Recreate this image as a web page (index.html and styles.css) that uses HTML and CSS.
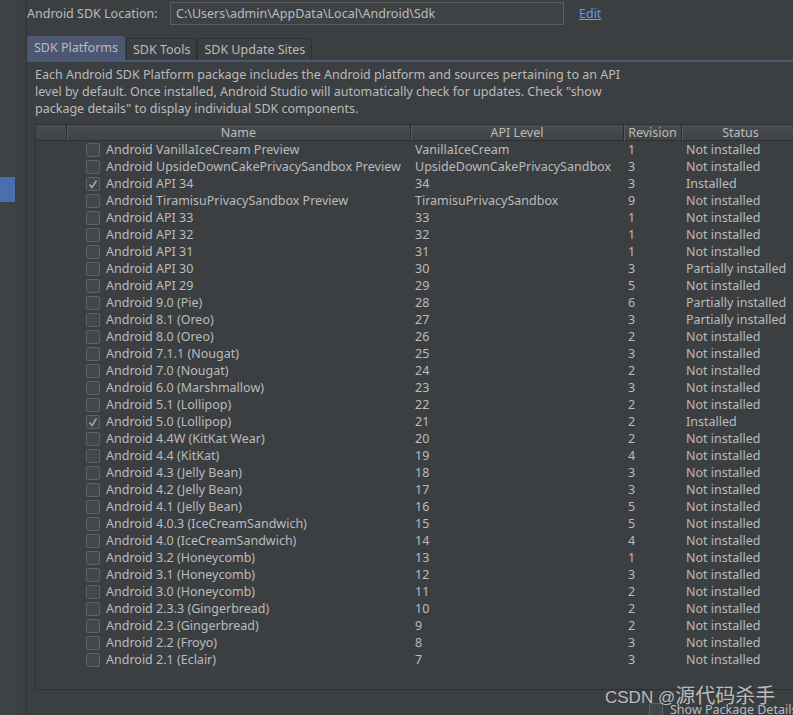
FILE: index.html
```html
<!DOCTYPE html>
<html>
<head>
<meta charset="utf-8">
<link rel="stylesheet" href="styles.css">
</head>
<body>
<div class="app">
  <aside class="sidebar"><div class="side-sel"></div></aside>
  <div class="gutter"></div>
  <main class="main">
    <div class="loc-row">
      <span class="loc-label">Android SDK Location:</span>
      <div class="loc-input">C:\Users\admin\AppData\Local\Android\Sdk</div>
      <a class="edit">Edit</a>
    </div>
    <div class="tabs">
      <div class="tab active">SDK Platforms</div>
      <div class="tab">SDK Tools</div>
      <div class="tab">SDK Update Sites</div>
    </div>
    <div class="panel">
      <p class="desc">Each Android SDK Platform package includes the Android platform and sources pertaining to an API<br>level by default. Once installed, Android Studio will automatically check for updates. Check "show<br>package details" to display individual SDK components.</p>
      <div class="table">
        <div class="thead">
          <div class="th"></div>
          <div class="th">Name</div>
          <div class="th">API Level</div>
          <div class="th">Revision</div>
          <div class="th">Status</div>
        </div>
        <div class="tbody" id="tbody"></div>
      </div>
      <div class="footer">
        <span class="cb"></span>
        <span class="footer-label">Show Package Details</span>
      </div>
    </div>
  </main>
  <div class="watermark"><span class="wm-latin">CSDN @</span>源代码杀手</div>
</div>
<script src="app.js"></script>
</body>
</html>
```
FILE: app.js
```js
const rows = [
  ["Android VanillaIceCream Preview","VanillaIceCream","1","Not installed",0],
  ["Android UpsideDownCakePrivacySandbox Preview","UpsideDownCakePrivacySandbox","3","Not installed",0],
  ["Android API 34","34","3","Installed",1],
  ["Android TiramisuPrivacySandbox Preview","TiramisuPrivacySandbox","9","Not installed",0],
  ["Android API 33","33","1","Not installed",0],
  ["Android API 32","32","1","Not installed",0],
  ["Android API 31","31","1","Not installed",0],
  ["Android API 30","30","3","Partially installed",0],
  ["Android API 29","29","5","Not installed",0],
  ["Android 9.0 (Pie)","28","6","Partially installed",0],
  ["Android 8.1 (Oreo)","27","3","Partially installed",0],
  ["Android 8.0 (Oreo)","26","2","Not installed",0],
  ["Android 7.1.1 (Nougat)","25","3","Not installed",0],
  ["Android 7.0 (Nougat)","24","2","Not installed",0],
  ["Android 6.0 (Marshmallow)","23","3","Not installed",0],
  ["Android 5.1 (Lollipop)","22","2","Not installed",0],
  ["Android 5.0 (Lollipop)","21","2","Installed",1],
  ["Android 4.4W (KitKat Wear)","20","2","Not installed",0],
  ["Android 4.4 (KitKat)","19","4","Not installed",0],
  ["Android 4.3 (Jelly Bean)","18","3","Not installed",0],
  ["Android 4.2 (Jelly Bean)","17","3","Not installed",0],
  ["Android 4.1 (Jelly Bean)","16","5","Not installed",0],
  ["Android 4.0.3 (IceCreamSandwich)","15","5","Not installed",0],
  ["Android 4.0 (IceCreamSandwich)","14","4","Not installed",0],
  ["Android 3.2 (Honeycomb)","13","1","Not installed",0],
  ["Android 3.1 (Honeycomb)","12","3","Not installed",0],
  ["Android 3.0 (Honeycomb)","11","2","Not installed",0],
  ["Android 2.3.3 (Gingerbread)","10","2","Not installed",0],
  ["Android 2.3 (Gingerbread)","9","2","Not installed",0],
  ["Android 2.2 (Froyo)","8","3","Not installed",0],
  ["Android 2.1 (Eclair)","7","3","Not installed",0]
];
const check = '<svg viewBox="0 0 14 14" width="14" height="14"><polyline points="3.5,7.5 6,10.5 10.5,3.5" fill="none" stroke="#a9a9a9" stroke-width="1.4"/></svg>';
const tb = document.getElementById('tbody');
tb.innerHTML = rows.map(r =>
  '<div class="tr"><div class="td"></div>' +
  '<div class="td name"><span class="cb">' + (r[4] ? check : '') + '</span><span>' + r[0] + '</span></div>' +
  '<div class="td">' + r[1] + '</div>' +
  '<div class="td">' + r[2] + '</div>' +
  '<div class="td">' + r[3] + '</div></div>'
).join('');
```
FILE: styles.css
```css
* { box-sizing: border-box; }
html, body { margin: 0; padding: 0; }
body {
  width: 793px;
  height: 715px;
  overflow: hidden;
  background: #3c3f41;
  color: #bbbbbb;
  font-family: "Noto Sans", "Noto Sans CJK SC", sans-serif;
  font-size: 12.5px;
}
.app {
  display: flex;
  height: 715px;
  position: relative;
}
.sidebar {
  width: 15px;
  flex: none;
  background: #3f4245;
  padding-top: 177px;
}
.side-sel {
  height: 25px;
  background: #4b6eaf;
}
.gutter {
  width: 12px;
  flex: none;
  background: #3c3f41;
  border-right: 1px solid #313335;
}
.main {
  flex: none;
  width: 780px;
  padding-top: 2px;
}
.loc-row {
  display: flex;
  align-items: center;
  height: 23px;
}
.loc-label {
  width: 143px;
  flex: none;
}
.loc-input {
  width: 394px;
  height: 23px;
  border: 1px solid #5b5e60;
  background: #3f4244;
  padding-left: 5px;
  line-height: 21px;
  flex: none;
}
.edit {
  margin-left: 15px;
  color: #589df6;
  text-decoration: underline;
}
.tabs {
  margin-top: 11px;
  display: flex;
  align-items: flex-end;
  height: 26px;
  border-bottom: 2px solid #4b5773;
}
.tab {
  height: 22px;
  padding: 0 6px;
  line-height: 21px;
  border: 1px solid #2f3133;
  border-bottom: none;
  border-radius: 3px 3px 0 0;
  background: #3c3f41;
}
.tab.active {
  height: 24px;
  line-height: 22px;
  background: #4b5773;
  border-color: #4b5773;
  padding: 0 6px;
  margin-right: 1px;
}
.panel {
  padding-left: 8px;
}
.desc {
  margin: 4px 0 0;
  line-height: 17px;
  white-space: nowrap;
}
.table {
  margin-top: 7px;
  width: 780px;
  height: 566px;
  border: 1px solid #2e3032;
  border-right: none;
  background: #3c3f41;
}
.thead, .tr {
  display: grid;
  grid-template-columns: 30px 344px 213px 58px 118px;
}
.thead {
  height: 16px;
  background: linear-gradient(#484c4e, #404446);
  border-bottom: 1px solid #2e3032;
}
.th {
  text-align: center;
  line-height: 16px;
  border-left: 1px solid #2b2d2e;
  box-shadow: inset 1px 0 0 #55595b;
}
.th:first-child { border-left: none; box-shadow: none; }
.tr { height: 17px; }
.td {
  line-height: 17px;
  padding-left: 5px;
  white-space: nowrap;
}
.td.name {
  padding-left: 20px;
  display: flex;
  align-items: center;
}
.cb {
  display: inline-block;
  width: 14px;
  height: 14px;
  border: 1px solid #5f6264;
  border-radius: 2px;
  background: #43474a;
  margin-right: 6px;
  flex: none;
}
.cb svg { display: block; margin: -1px; }
.footer {
  display: flex;
  align-items: center;
  margin-top: 11px;
  padding-left: 614px;
  white-space: nowrap;
}
.footer .cb { margin-right: 7px; }
.watermark {
  position: absolute;
  left: 605px;
  top: 682px;
  font-family: "Noto Sans CJK SC", sans-serif;
  font-size: 20px;
  line-height: 26px;
  color: rgba(228, 228, 228, 0.8);
  text-shadow: 0 0 1px rgba(0,0,0,0.4);
  white-space: nowrap;
}
.wm-latin {
  font-family: "Liberation Sans", sans-serif;
  font-size: 17px;
}
```
